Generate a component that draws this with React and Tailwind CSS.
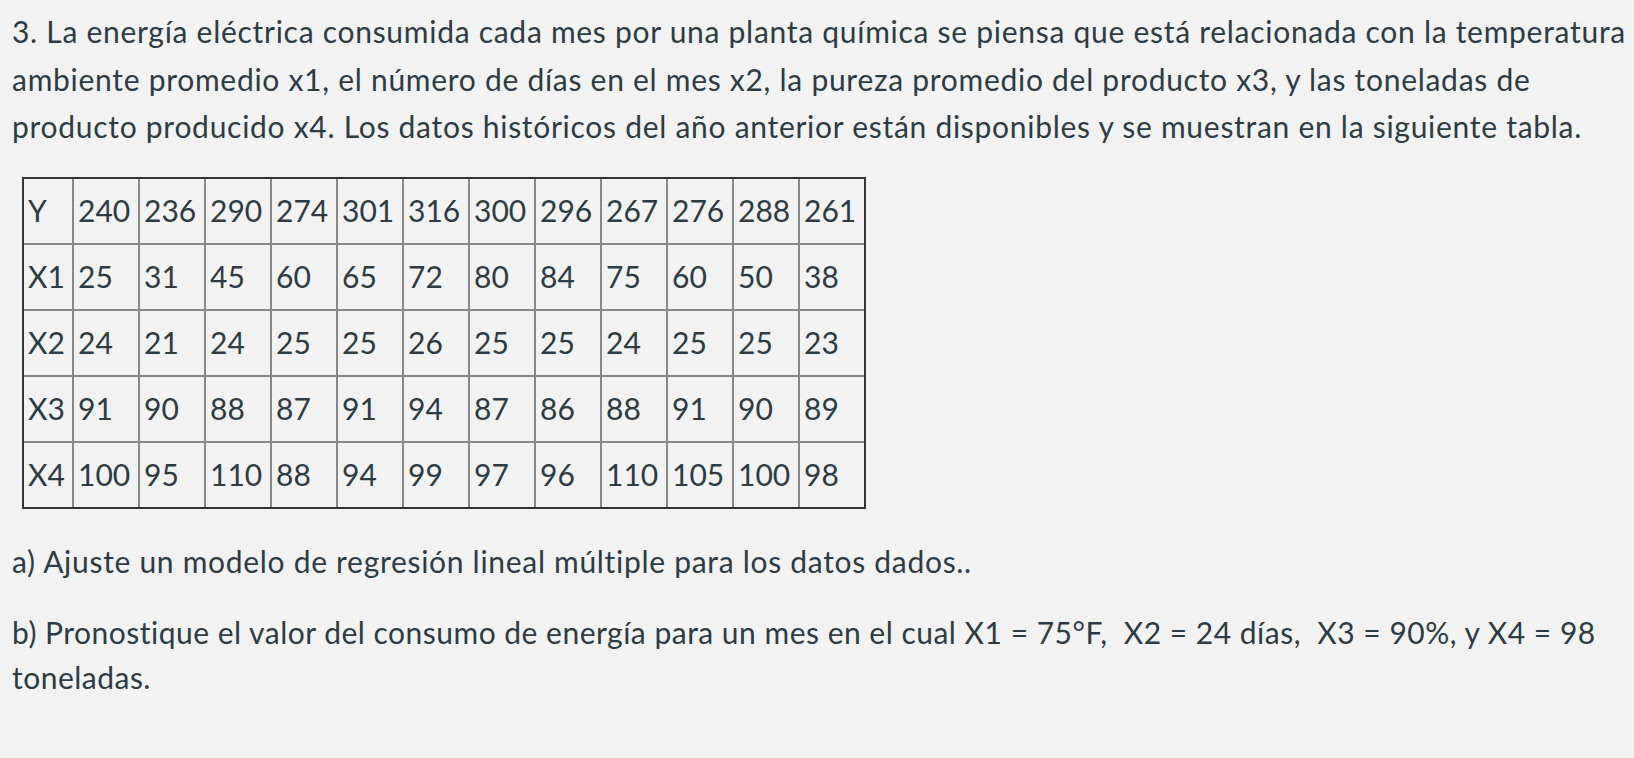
import React from 'react';

const rows = [
  ['Y', '240', '236', '290', '274', '301', '316', '300', '296', '267', '276', '288', '261'],
  ['X1', '25', '31', '45', '60', '65', '72', '80', '84', '75', '60', '50', '38'],
  ['X2', '24', '21', '24', '25', '25', '26', '25', '25', '24', '25', '25', '23'],
  ['X3', '91', '90', '88', '87', '91', '94', '87', '86', '88', '91', '90', '89'],
  ['X4', '100', '95', '110', '88', '94', '99', '97', '96', '110', '105', '100', '98'],
];

const DataTable = () => (
  <div className="mt-[26px] ml-[10px] w-fit border-2 border-[#333]">
    {rows.map((row, r) => (
      <div
        key={r}
        className={
          r < rows.length - 1
            ? 'flex h-[66px] border-b-2 border-[#888]'
            : 'flex h-[64px]'
        }
      >
        {row.map((cell, c) => (
          <div
            key={c}
            className={
              c === 0
                ? 'flex w-[50px] items-center border-r-2 border-[#888] pl-1'
                : c < row.length - 1
                ? 'flex w-[66px] items-center border-r-2 border-[#888] pl-1'
                : 'flex w-[64px] items-center pl-1'
            }
          >
            {cell}
          </div>
        ))}
      </div>
    ))}
  </div>
);

const App = () => {
  return (
    <div className="min-h-screen bg-[#f2f2f2] pl-3 pr-1 pt-2 font-['Lato','Liberation_Sans',sans-serif] text-[30px] text-[#2d3b45]">
      <p className="leading-[47.5px] tracking-[0.72px]">
        3. La energía eléctrica consumida cada mes por una planta química se piensa que está
        relacionada con la temperatura ambiente promedio x1, el número de días en el mes x2, la
        pureza promedio del producto x3, y las toneladas de producto producido x4. Los datos
        históricos del año anterior están disponibles y se muestran en la siguiente tabla.
      </p>

      <DataTable />

      <p className="mt-[30px] leading-[45px] tracking-[0.7px]">
        a) Ajuste un modelo de regresión lineal múltiple para los datos dados..
      </p>

      <p className="mt-[26px] leading-[45px] tracking-[0.49px]">
        b) Pronostique el valor del consumo de energía para un mes en el cual X1 = 75°F,&nbsp; X2 =
        24 días,&nbsp; X3 = 90%, y X4 = 98 toneladas.
      </p>
    </div>
  );
};

export default App;
